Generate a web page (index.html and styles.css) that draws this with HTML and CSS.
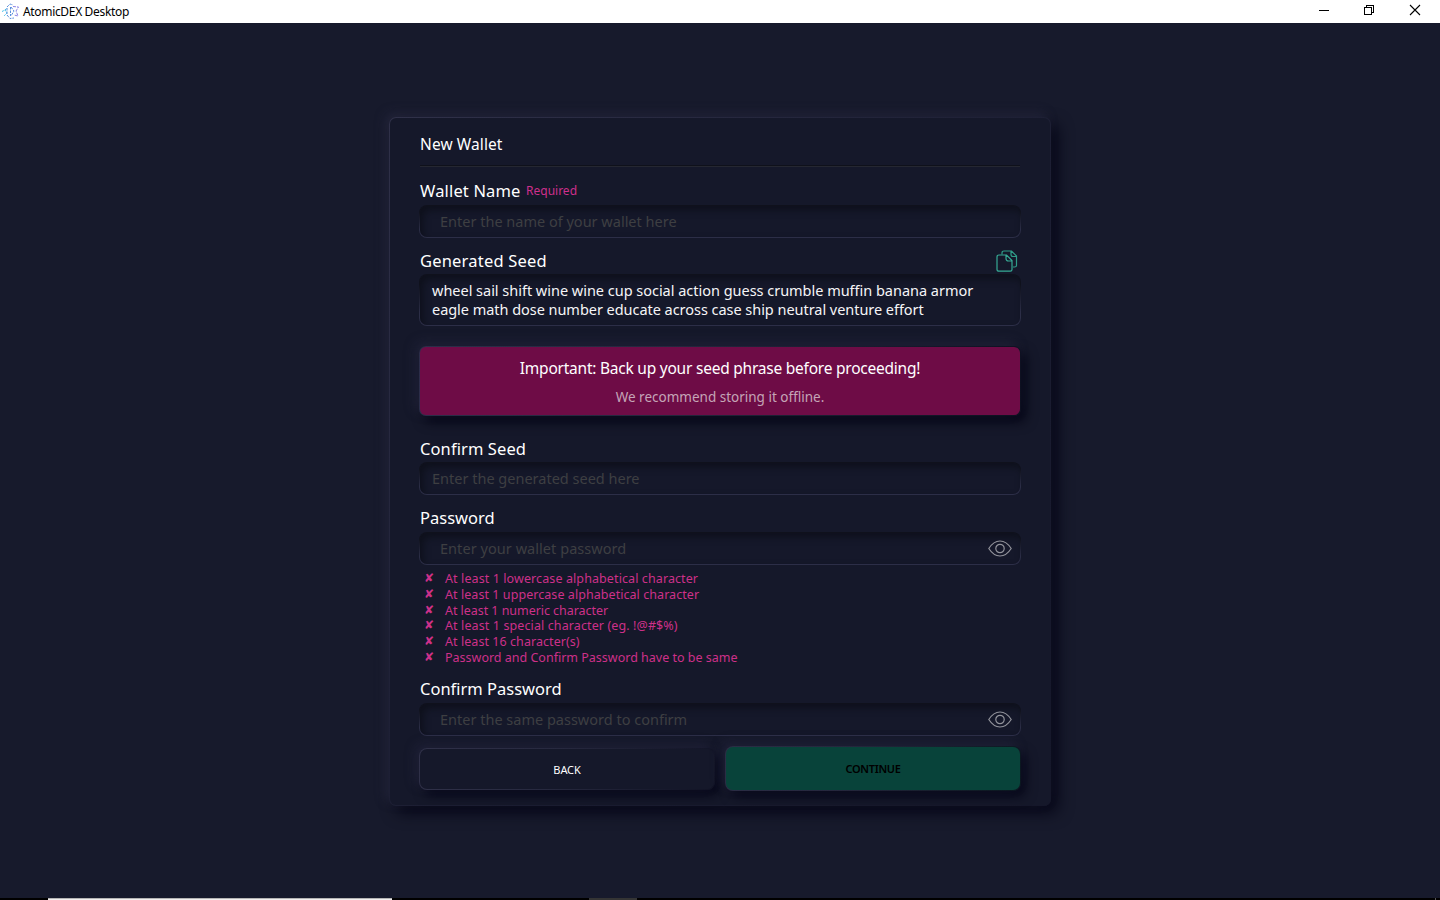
FILE: index.html
```html
<!DOCTYPE html>
<html lang="en">
<head>
<meta charset="utf-8">
<title>AtomicDEX Desktop</title>
<link rel="stylesheet" href="styles.css">
</head>
<body>
<header class="titlebar">
  <svg class="logo" width="17" height="17" viewBox="0 0 17 17" fill="none" stroke-width="1">
    <path d="M0 8.500 L3 7 L5 10 L2 13 M3 7 L5 5" stroke="#45c0ea" stroke-dasharray="2 1"/>
    <path d="M5 4 L8 1 L11 2 M5 5 V12 L8 15.500 L12 15 M8.500 4 V13 M9 4 L12 8 L9 13" stroke="#5b8fdc" stroke-dasharray="2.500 1"/>
    <path d="M11 3.500 L16.500 4 L14 8 L16 13 L12 12" stroke="#8b84e6" stroke-dasharray="3 1"/>
  </svg>
  <span class="app-name">AtomicDEX Desktop</span>
  <svg class="controls" width="104" height="12" viewBox="0 0 104 12" fill="none" stroke="#000" shape-rendering="crispEdges">
    <path d="M1 6.500H11"/>
    <path d="M46.500 3.500h7v7h-7zM48.500 3.500v-2h7v7h-2"/>
    <path d="M92 1 L102 11 M102 1 L92 11" shape-rendering="auto" stroke-width="1.100"/>
  </svg>
</header>
<main class="stage">
  <section class="card">
    <h1 class="title">New Wallet</h1>
    <div class="label first"><span class="l-name">Wallet Name</span><span class="required">Required</span></div>
    <div class="input wide raised"><span>Enter the name of your wallet here</span></div>
    <div class="label seed-label"><span class="l-gen">Generated Seed</span>
      <svg class="copy" width="22" height="22" viewBox="0 0 22 22" fill="none" stroke="#2f9c88" stroke-width="1.200">
        <path d="M6 4.500 V3 Q6 1 8 1 H15.500 L20.500 6 V15.500 Q20.500 17 18.500 17 H17 M15 1 V4.500 Q15 6.500 17 6.500 H20.500"/>
        <path d="M3 5 H10.500 L16 10.500 V19.500 Q16 21.200 14.300 21.200 H3 Q1 21.200 1 19.500 V7 Q1 5 3 5 Z M10 5 V8.500 Q10 11 12.500 11 H16" stroke="#36aa95"/>
      </svg>
    </div>
    <div class="input seed"><p><span class="s1">wheel sail shift wine wine cup social action guess crumble muffin banana armor</span><br><span class="s2">eagle math dose number educate across case ship neutral venture effort</span></p></div>
    <div class="alert">
      <p class="alert-title">Important: Back up your seed phrase before proceeding!</p>
      <p class="alert-sub">We recommend storing it offline.</p>
    </div>
    <div class="label confirm-label"><span class="l-conf">Confirm Seed</span></div>
    <div class="input raised"><span>Enter the generated seed here</span></div>
    <div class="label pass-label"><span>Password</span></div>
    <div class="input wide raised"><span class="p3">Enter your wallet password</span>
      <svg class="eye" width="24" height="17" viewBox="0 0 24 17" fill="none" stroke="#92939b" stroke-width="1.200"><path d="M.8 8.500 C4 3.500 7.500 1 12 1 S20 3.500 23.200 8.500 C20 13.500 16.500 16 12 16 S4 13.500 .8 8.500 Z"/><circle cx="12" cy="8.500" r="4.200"/></svg>
    </div>
    <ul class="rules">
      <li><i>✘</i><span class="r1">At least 1 lowercase alphabetical character</span></li>
      <li><i>✘</i><span class="r2">At least 1 uppercase alphabetical character</span></li>
      <li><i>✘</i><span class="r3">At least 1 numeric character</span></li>
      <li><i>✘</i><span class="r4">At least 1 special character (eg. !@#$%)</span></li>
      <li><i>✘</i><span class="r5">At least 16 character(s)</span></li>
      <li><i>✘</i><span>Password and Confirm Password have to be same</span></li>
    </ul>
    <div class="label again-label"><span>Confirm Password</span></div>
    <div class="input wide"><span>Enter the same password to confirm</span>
      <svg class="eye" width="24" height="17" viewBox="0 0 24 17" fill="none" stroke="#92939b" stroke-width="1.200"><path d="M.8 8.500 C4 3.500 7.500 1 12 1 S20 3.500 23.200 8.500 C20 13.500 16.500 16 12 16 S4 13.500 .8 8.500 Z"/><circle cx="12" cy="8.500" r="4.200"/></svg>
    </div>
    <div class="actions">
      <button class="btn back">BACK</button>
      <button class="btn continue">CONTINUE</button>
    </div>
  </section>
</main>
<footer class="taskbar"><span class="task-window"></span><span class="task-active"></span><span class="task-end"></span></footer>
</body>
</html>
```
FILE: styles.css
```css
* { box-sizing: border-box; }
body {
  margin: 0;
  width: 1440px;
  height: 900px;
  overflow: hidden;
  display: flex;
  flex-direction: column;
  background: #171a2c;
  color: #fff;
  font-family: "Noto Sans", "Open Sans", sans-serif;
}
p, h1, ul { margin: 0; padding: 0; font-weight: 400; }
svg { flex: none; }
.titlebar {
  height: 23px;
  flex: none;
  display: flex;
  align-items: center;
  padding: 0 18px 0 2px;
  background: #fff;
  color: #000;
}
.app-name { margin-left: 4px; flex: 1; font-size: 12px; line-height: 22px; letter-spacing: -0.33px; }
.controls { margin: -4px 0 0; }
.stage { flex: 1; display: flex; justify-content: center; align-items: flex-start; padding-top: 94px; }
.card {
  width: 662px;
  height: 689px;
  padding: 0 29px;
  border: 1px solid transparent;
  border-radius: 7px;
  background: linear-gradient(#15182a, #15182a) padding-box, linear-gradient(135deg, #303149, #1d1f34 50%, #15172a) border-box;
  box-shadow: -4px -4px 11px rgba(50, 50, 76, .42), 7px 7px 15px rgba(2, 2, 18, .75);
}
.title {
  height: 48px;
  margin: 0 1px;
  border-bottom: 1px solid #0f111b;
  box-shadow: 0 1px #252731;
  font-size: 15.500px;
  line-height: 53px;
  letter-spacing: .1px;
}
.label {
  display: flex;
  align-items: center;
  height: 26px;
  padding: 0 3px 0 1px;
  font-size: 16.500px;
  line-height: 26px;
}
.first { margin-top: 12px; margin-bottom: 1px; }
.l-name { letter-spacing: .15px; }
.l-gen { letter-spacing: .2px; }
.l-conf { letter-spacing: .1px; }
.required { margin-left: 5.500px; color: #cd2f8c; font-size: 12px; }
.input {
  display: flex;
  align-items: center;
  height: 33px;
  padding: 0 8px 0 12px;
  border: 1px solid transparent;
  border-radius: 8px;
  background: linear-gradient(#15182a, #15182a) padding-box, linear-gradient(#0f111c 20%, #2c2e47 75%) border-box;
  box-shadow: inset 3px 4px 7px rgba(9, 10, 17, .58);
  color: #3e3f42;
  font-size: 14.500px;
}
.raised > span { padding-bottom: 2px; }
.p3 { letter-spacing: .05px; }
.wide { padding-left: 20px; }
.seed-label { margin-top: 10px; }
.copy { margin-left: auto; }
.seed { height: 52px; color: #f5f5f7; line-height: 19px; white-space: nowrap; }
.s1 { letter-spacing: -.02px; }
.s2 { letter-spacing: -.04px; }
.alert {
  height: 70px;
  margin: 20px 0 0;
  padding-top: 10px;
  border: 1px solid transparent;
  border-radius: 7px;
  background: linear-gradient(#6e0c46, #6e0c46) padding-box, linear-gradient(110deg, #2c2e49, #25273e 40%, #0d1020) border-box;
  box-shadow: -4px -4px 12px rgba(48, 48, 75, .4), 5px 6px 12px rgba(2, 2, 18, .75);
  text-align: center;
}
.alert-title { font-size: 15.500px; line-height: 22px; letter-spacing: -.23px; }
.alert-sub { margin-top: 8px; color: #c5a5b7; font-size: 13.500px; line-height: 20px; }
.confirm-label { margin-top: 20px; }
.pass-label { margin-top: 10px; margin-bottom: 1px; }
.eye { margin-left: auto; }
.rules { list-style: none; padding: 6px 0 0 5px; color: #cd3089; font-size: 12.500px; line-height: 15.800px; }
.rules li { display: flex; height: 15.800px; }
.rules i { width: 21px; font-family: "DejaVu Sans", sans-serif; font-style: normal; font-size: 12px; }
.r1 { letter-spacing: .1px; }
.r2 { letter-spacing: .06px; }
.r3 { letter-spacing: -.05px; }
.r4 { letter-spacing: .11px; }
.r5 { letter-spacing: .06px; }
.again-label { margin-top: 10.200px; height: 27px; }
.actions { display: flex; align-items: center; gap: 10px; margin-top: 10px; height: 45px; }
.btn {
  padding: 0;
  border: 1px solid transparent;
  border-radius: 8px;
  font-family: inherit;
  font-size: 11px;
  box-shadow: -4px -4px 11px rgba(48, 48, 75, .38), 5px 6px 11px rgba(2, 2, 18, .65);
}
.back {
  width: 296px;
  height: 42px;
  margin-top: 2px;
  color: #fff;
  letter-spacing: -.1px;
  background: linear-gradient(#15182a, #15182a) padding-box, linear-gradient(110deg, #303149, #27293f 45%, #111325) border-box;
}
.continue {
  width: 296px;
  height: 45px;
  color: #000;
  font-weight: 600;
  letter-spacing: -.3px;
  background: linear-gradient(#08433a, #08433a) padding-box, linear-gradient(110deg, #2b2d45, #25273d 40%, #0a171f) border-box;
}
.taskbar { height: 2px; flex: none; display: flex; background: #000; }
.task-window { width: 344px; margin-left: 48px; background: #f2f0ef; border-top: 1px solid #b5b5b5; }
.task-active { width: 48px; margin-left: 197px; background: #343434; }
.task-end { width: 1px; margin-left: auto; margin-right: 4px; background: #555; }
```
